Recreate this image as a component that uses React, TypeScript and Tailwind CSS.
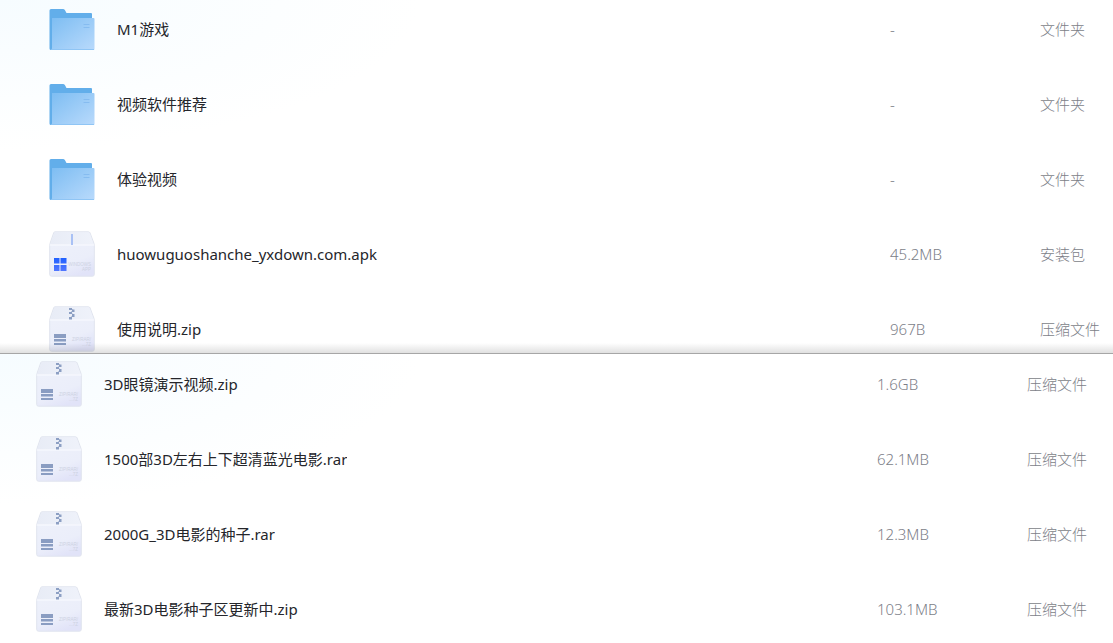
import React from "react";

type Kind = "folder" | "apk" | "zip";

interface Entry {
  name: string;
  size: string;
  type: string;
  kind: Kind;
}

const library: Entry[] = [
  { name: "M1游戏", size: "-", type: "文件夹", kind: "folder" },
  { name: "视频软件推荐", size: "-", type: "文件夹", kind: "folder" },
  { name: "体验视频", size: "-", type: "文件夹", kind: "folder" },
  { name: "huowuguoshanche_yxdown.com.apk", size: "45.2MB", type: "安装包", kind: "apk" },
  { name: "使用说明.zip", size: "967B", type: "压缩文件", kind: "zip" },
];

const archives: Entry[] = [
  { name: "3D眼镜演示视频.zip", size: "1.6GB", type: "压缩文件", kind: "zip" },
  { name: "1500部3D左右上下超清蓝光电影.rar", size: "62.1MB", type: "压缩文件", kind: "zip" },
  { name: "2000G_3D电影的种子.rar", size: "12.3MB", type: "压缩文件", kind: "zip" },
  { name: "最新3D电影种子区更新中.zip", size: "103.1MB", type: "压缩文件", kind: "zip" },
];

function Gradients() {
  return (
    <svg className="absolute h-0 w-0" aria-hidden="true">
      <defs>
        <linearGradient id="folderFront" x1="0" y1="0" x2="1" y2="1">
          <stop offset="0" stopColor="#7dbdf2" />
          <stop offset="1" stopColor="#b9dafc" />
        </linearGradient>
        <linearGradient id="boxFront" x1="0.2" y1="0" x2="0.6" y2="1">
          <stop offset="0" stopColor="#eef1fa" />
          <stop offset="0.7" stopColor="#ebeefa" />
          <stop offset="1" stopColor="#e1e3f8" />
        </linearGradient>
        <linearGradient id="boxLid" x1="0" y1="0" x2="1" y2="0">
          <stop offset="0" stopColor="#e8ecf6" />
          <stop offset="1" stopColor="#eff2fa" />
        </linearGradient>
        <linearGradient id="windowBlue" x1="0" y1="0" x2="0" y2="1">
          <stop offset="0" stopColor="#1f60ff" />
          <stop offset="1" stopColor="#5277ff" />
        </linearGradient>
      </defs>
    </svg>
  );
}

function FolderIcon() {
  return (
    <svg viewBox="0 0 46 46" className="block size-[46px]" aria-hidden="true">
      <path d="M0.5 4.5Q0.5 3 2 3H14Q15.200 3 16 4.300L17.500 7H42Q43 7 43 8V44H2Q0.500 44 0.500 42.500Z" fill="#62aeea" />
      <path d="M3 12H44.500Q45.500 12 45.500 13V43Q45.500 44 44.500 44H2Q3 43.500 3 42Z" fill="url(#folderFront)" />
      <path d="M34.500 18.500H40.500M34.500 21.500H40.500" stroke="#86bcf0" strokeWidth="1" />
      <path d="M2.500 43.500H45" stroke="#8fc5f5" strokeWidth="1" />
    </svg>
  );
}

function Carton({ children, label, sub }: { children: React.ReactNode; label: string; sub: string }) {
  return (
    <svg viewBox="0 0 46 46" className="block size-[46px]" aria-hidden="true">
      <path
        d="M6 0.800H39.500Q40.500 0.800 41 1.800L45 12.500Q45.300 13.500 45.300 14.500V43.500Q45.300 45.200 43.500 45.200H2.500Q0.700 45.200 0.700 43.500V14.500Q0.700 13.500 1 12.500L4.700 1.800Q5 0.800 6 0.800Z"
        fill="url(#boxFront)"
        stroke="#e0e4ee"
        strokeWidth="1"
      />
      <path d="M6 1.300H39.500L41 3L44.700 13.500H1.200L5.200 2Z" fill="url(#boxLid)" />
      <path d="M1 14H45" stroke="#fafbff" strokeWidth="1" />
      {children}
      <text x="42" y="34.500" textAnchor="end" fontSize="4.500" fontFamily="Liberation Sans, sans-serif" fill="#cdd2e2">{label}</text>
      <text x="42" y="40" textAnchor="end" fontSize="4.500" fontFamily="Liberation Sans, sans-serif" fill="#cdd2e2">{sub}</text>
    </svg>
  );
}

function FileIcon({ kind }: { kind: Kind }) {
  if (kind === "folder") return <FolderIcon />;
  if (kind === "apk") {
    return (
      <Carton label="WINDOWS" sub="APP">
        <path d="M22 3H24V14H22Z" fill="#a9c1f5" />
        <path d="M5 27H10.500V32.500H5ZM11.500 27H17.500V32.500H11.500ZM5 34H10.500V40H5ZM11.500 34H17.500V40H11.500Z" fill="url(#windowBlue)" />
      </Carton>
    );
  }
  return (
    <Carton label="ZIP/RAR/" sub="...7Z">
      <path
        d="M20 2H23V4H20ZM23 3.500H25.500V6H23ZM20 6H23V8H20ZM23 8H25.500V11H23ZM20 11H23V13.500H20Z"
        fill="#8c9fc3"
      />
      <path d="M22 2.500L24 4.500L22 6.500L24 9L22 12" fill="none" stroke="#8c9fc3" strokeWidth="1" />
      <path d="M5 28H17V32H5ZM5 33H17V35.500H5ZM5 37H17V39H5Z" fill="#8a9dc2" />
    </Carton>
  );
}

function FileTable({ entries, label, inset }: { entries: Entry[]; label: string; inset?: boolean }) {
  return (
    <table aria-label={label} className="w-full table-fixed border-collapse text-left">
      <colgroup>
        <col />
        <col className="w-[150px]" />
        <col className={inset ? "w-[86px]" : "w-[73px]"} />
      </colgroup>
      <tbody>
        {entries.map((entry) => (
          <tr key={entry.name} className="group">
            <td className={`pb-[29px] group-last:pb-0 ${inset ? "pl-9" : "pl-[49px]"}`}>
              <div className="flex items-center gap-[22px]">
                <FileIcon kind={entry.kind} />
                <span className="truncate text-[#25262b]">{entry.name}</span>
              </div>
            </td>
            <td className="pb-[29px] font-light text-[#7c7e88] group-last:pb-0">{entry.size}</td>
            <td className="whitespace-nowrap pb-[29px] font-light text-[#7c7e88] group-last:pb-0">{entry.type}</td>
          </tr>
        ))}
      </tbody>
    </table>
  );
}

export default function App() {
  return (
    <main className="min-h-screen bg-white font-['Noto_Sans','Noto_Sans_CJK_SC',sans-serif] text-[15px] leading-5">
      <Gradients />
      <section className="relative border-b border-[#a6a6a6] bg-[radial-gradient(ellipse_420px_150px_at_0_0,#f6fcff,#ffffff)] pt-1.5 pb-px">
        <FileTable entries={library} label="文件" />
        <div className="pointer-events-none absolute inset-x-0 bottom-0 h-2.5 bg-linear-to-b from-black/0 to-black/12" />
      </section>
      <section className="bg-[radial-gradient(ellipse_420px_150px_at_0_0,#f6fcff,#ffffff)] pt-[7px] pb-2">
        <FileTable entries={archives} label="压缩文件" inset />
      </section>
    </main>
  );
}
